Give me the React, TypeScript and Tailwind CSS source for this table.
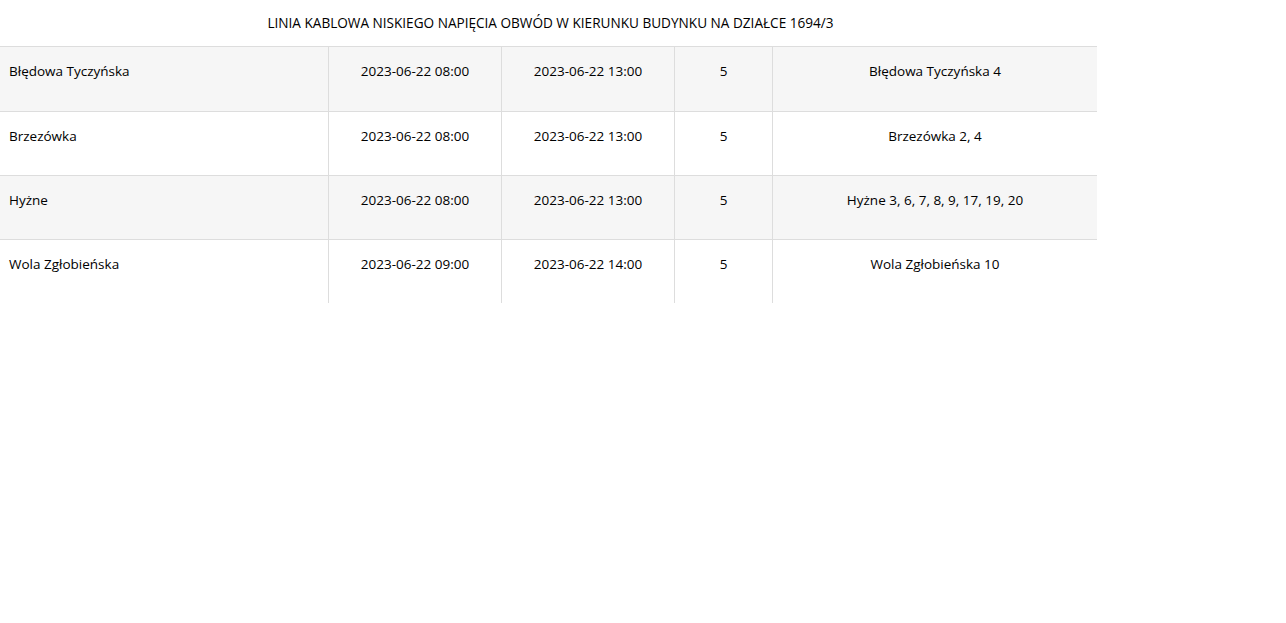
const rows = [
  {
    place: 'Błędowa Tyczyńska',
    from: '2023-06-22 08:00',
    to: '2023-06-22 13:00',
    count: '5',
    addresses: 'Błędowa Tyczyńska 4',
  },
  {
    place: 'Brzezówka',
    from: '2023-06-22 08:00',
    to: '2023-06-22 13:00',
    count: '5',
    addresses: 'Brzezówka 2, 4',
  },
  {
    place: 'Hyżne',
    from: '2023-06-22 08:00',
    to: '2023-06-22 13:00',
    count: '5',
    addresses: 'Hyżne 3, 6, 7, 8, 9, 17, 19, 20',
  },
  {
    place: 'Wola Zgłobieńska',
    from: '2023-06-22 09:00',
    to: '2023-06-22 14:00',
    count: '5',
    addresses: 'Wola Zgłobieńska 10',
  },
];

export default function App() {
  return (
    <div className="min-h-screen bg-white text-[14px] text-black font-['Open_Sans',sans-serif]">
      <div className="w-[1097px]">
        {/* Title */}
        <div className="h-[46px] flex items-center justify-center pt-[1px] pl-[4px] text-[13.6px]">
          LINIA KABLOWA NISKIEGO NAPIĘCIA OBWÓD W KIERUNKU BUDYNKU NA DZIAŁCE 1694/3
        </div>

        {/* Rows */}
        {rows.map((row, i) => (
          <div
            key={i}
            className={`grid grid-cols-[328px_173px_173px_98px_325px] border-t border-[#dddddd] text-[13.5px] ${
              i === 0 ? 'h-[65px]' : 'h-[64px]'
            } ${i % 2 === 0 ? 'bg-[#f6f6f6]' : 'bg-white'}`}
          >
            <div className="pl-[9px] pt-[14px]">{row.place}</div>
            <div className="border-l border-[#dddddd] text-center pt-[14px]">{row.from}</div>
            <div className="border-l border-[#dddddd] text-center pt-[14px]">{row.to}</div>
            <div className="border-l border-[#dddddd] text-center pt-[14px]">{row.count}</div>
            <div className="border-l border-[#dddddd] text-center pt-[14px]">{row.addresses}</div>
          </div>
        ))}
      </div>
    </div>
  );
}
